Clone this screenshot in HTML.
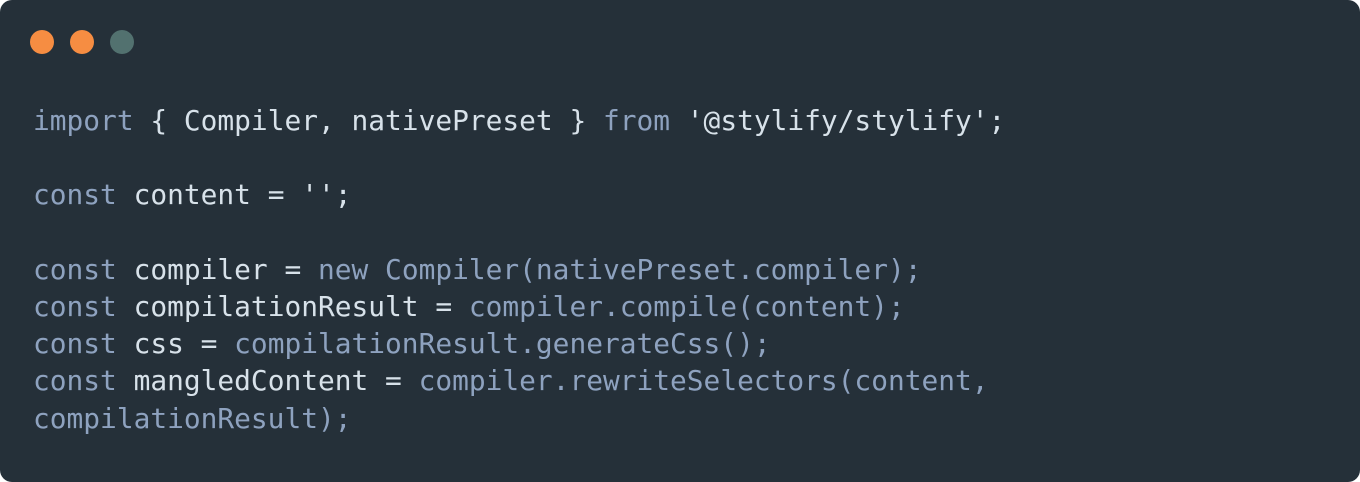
<!DOCTYPE html>
<html><head><style>
html,body{margin:0;padding:0;background:#fff;}
.w{position:absolute;left:0;top:0;width:1360px;height:482px;background:#253039;border-radius:12px;overflow:hidden;}
.d{position:absolute;top:30px;width:24px;height:24px;border-radius:50%;}
pre{position:absolute;left:33px;top:102px;margin:0;font-family:"DejaVu Sans Mono","Liberation Mono",monospace;font-size:27.85px;line-height:37.2px;color:#d8e2ea;}
.k{color:#8ea2bf;}
</style></head><body>
<div class="w">
<div class="d" style="left:30px;background:#f68d42"></div>
<div class="d" style="left:70px;background:#f68d42"></div>
<div class="d" style="left:110px;background:#52716f"></div>
<pre><span class="k">import</span> { Compiler, nativePreset } <span class="k">from</span> '@stylify/stylify';

<span class="k">const</span> content = '';

<span class="k">const</span> compiler = <span class="k">new Compiler(nativePreset.compiler);</span>
<span class="k">const</span> compilationResult = <span class="k">compiler.compile(content);</span>
<span class="k">const</span> css = <span class="k">compilationResult.generateCss();</span>
<span class="k">const</span> mangledContent = <span class="k">compiler.rewriteSelectors(content,</span>
<span class="k">compilationResult);</span></pre>
</div>
</body></html>
